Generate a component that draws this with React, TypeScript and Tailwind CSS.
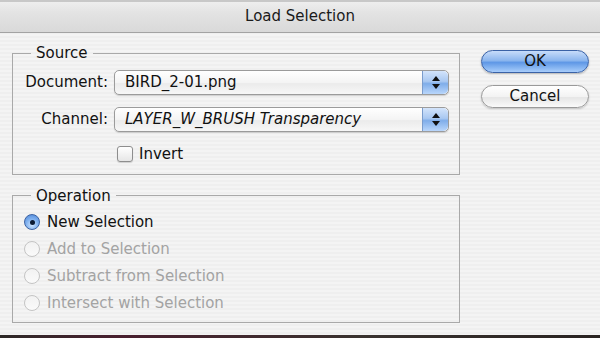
import React from 'react';

const font = { fontFamily: '"DejaVu Sans", "Liberation Sans", sans-serif' };

function Stepper() {
  return (
    <div className="w-[26px] h-full flex flex-col items-center justify-center gap-[3px] rounded-r-[5px] border-l border-[#7a9ccc] bg-[linear-gradient(180deg,#d3e4fb_0%,#a9c8f1_45%,#7fade9_55%,#b9d6fb_100%)]">
      <svg width="8" height="5" viewBox="0 0 8 5"><path d="M4 0 L8 5 L0 5 Z" fill="#111" /></svg>
      <svg width="8" height="5" viewBox="0 0 8 5"><path d="M0 0 L8 0 L4 5 Z" fill="#111" /></svg>
    </div>
  );
}

function Popup({ value, italic }: { value: string; italic?: boolean }) {
  return (
    <div className="w-[335px] h-[25px] flex items-stretch rounded-[5px] border border-[#9b9b9b] shadow-[0_1px_1px_rgba(0,0,0,0.15)] bg-[linear-gradient(180deg,#ffffff_0%,#f4f4f4_50%,#ebebeb_55%,#f7f7f7_100%)]">
      <div className={`flex-1 flex items-center pl-[10px] text-[15px] text-[#111] ${italic ? 'italic' : ''}`}>{value}</div>
      <Stepper />
    </div>
  );
}

function Radio({ label, checked, disabled }: { label: string; checked?: boolean; disabled?: boolean }) {
  return (
    <div className="h-[27px] flex items-center pl-[11px] gap-[7px]">
      {checked ? (
        <div className="w-[16px] h-[16px] rounded-full border border-[#3d63a3] flex items-center justify-center bg-[radial-gradient(circle_at_50%_70%,#cfe5ff_0%,#7fb0ee_50%,#4a83d6_100%)]">
          <div className="w-[5px] h-[5px] rounded-full bg-[#0b1a33]" />
        </div>
      ) : (
        <div className="w-[16px] h-[16px] rounded-full border border-[#c4c4c4] bg-[linear-gradient(180deg,#f2f2f2,#fafafa)]" />
      )}
      <span className={`text-[15px] ${disabled ? 'text-[#a3a3a3]' : 'text-[#111]'}`}>{label}</span>
    </div>
  );
}

export default function App() {
  return (
    <div style={font} className="w-[600px] h-[338px] flex flex-col overflow-hidden bg-[repeating-linear-gradient(180deg,#efefef_0px,#efefef_2px,#f4f4f4_2px,#f4f4f4_4px)]">
      {/* title bar */}
      <div className="h-[33px] shrink-0 flex items-center justify-center border-b border-[#a3a3a3] bg-[linear-gradient(180deg,#f0f0f0_0%,#e3e3e3_40%,#d9d9d9_100%)] shadow-[inset_0_2px_0_#c8c8c8]">
        <span className="text-[15px] text-[#1a1a1a]">Load Selection</span>
      </div>

      <div className="flex-1 flex pl-[12px] pt-[11px]">
        <div className="w-[448px] flex flex-col gap-[12px]">
          {/* Source */}
          <fieldset className="border border-[#a9a9a9] pl-[18px] pr-0 pt-0 pb-[8px] m-0 min-w-0">
            <legend className="px-[5px] text-[15px] leading-[18px] text-[#111]">Source</legend>
            <div className="-ml-[18px] flex flex-col">
              <div className="flex items-center mt-[8px]">
                <span className="w-[95px] text-right text-[15px] text-[#111]">Document:</span>
                <div className="ml-[6px]"><Popup value="BIRD_2-01.png" /></div>
              </div>
              <div className="flex items-center mt-[12px]">
                <span className="w-[95px] text-right text-[15px] text-[#111]">Channel:</span>
                <div className="ml-[6px]"><Popup value="LAYER_W_BRUSH Transparency" italic /></div>
              </div>
              <div className="flex items-center mt-[11px] pl-[104px] gap-[6px]">
                <div className="w-[16px] h-[16px] rounded-[3px] border border-[#8e8e8e] bg-[linear-gradient(180deg,#ffffff,#e6e6e6)] shadow-[0_1px_1px_rgba(0,0,0,0.15)]" />
                <span className="text-[15px] text-[#111]">Invert</span>
              </div>
            </div>
          </fieldset>

          {/* Operation */}
          <fieldset className="border border-[#a9a9a9] pl-[18px] pr-0 pt-0 pb-[5px] m-0 min-w-0">
            <legend className="px-[5px] text-[15px] leading-[18px] text-[#111]">Operation</legend>
            <div className="-ml-[18px] flex flex-col mt-[4px]">
              <Radio label="New Selection" checked />
              <Radio label="Add to Selection" disabled />
              <Radio label="Subtract from Selection" disabled />
              <Radio label="Intersect with Selection" disabled />
            </div>
          </fieldset>
        </div>

        <div className="ml-[21px] mt-[6px] flex flex-col gap-[12px]">
          <button className="w-[108px] h-[23px] rounded-full border border-[#3a62a6] text-[15px] leading-none text-[#111] bg-[linear-gradient(180deg,#c7dcfa_0%,#8cb6ee_45%,#5f98e6_55%,#a8cdfb_100%)] shadow-[0_1px_2px_rgba(0,0,0,0.25)]">OK</button>
          <button className="w-[108px] h-[23px] rounded-full border border-[#9a9a9a] text-[15px] leading-none text-[#111] bg-[linear-gradient(180deg,#ffffff_0%,#f3f3f3_50%,#e6e6e6_55%,#fafafa_100%)] shadow-[0_1px_2px_rgba(0,0,0,0.2)]">Cancel</button>
        </div>
      </div>

      <div className="h-[3px] shrink-0 bg-[linear-gradient(90deg,#2e2a28_0%,#4a2030_20%,#3a3330_60%,#2a2422_100%)]" />
    </div>
  );
}
